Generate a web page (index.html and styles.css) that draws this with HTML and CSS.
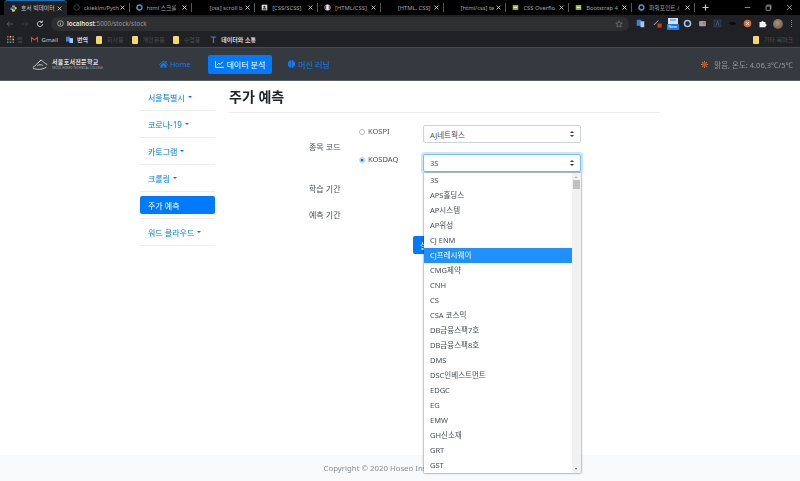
FILE: index.html
```html
<!DOCTYPE html>
<html lang="ko">
<head>
<meta charset="utf-8">
<title>호서 빅데이터</title>
<link rel="stylesheet" href="styles.css">
</head>
<body>
<div class="browser">
  <div class="tabstrip">
    <div class="tab active"><svg class="fav" viewBox="0 0 10 10"><path d="M5 0.5C3 .5 2.8 1.3 2.8 2.2V3h2.4v.5H1.8C.8 3.5 .5 4.3 .5 5.2s.4 1.8 1.3 1.8h1V5.8c0-.8.6-1.3 1.3-1.3h2c.8 0 1.2-.5 1.2-1.2V1.9C7.3 1 6.300 .5 5 .5z" fill="#5b9bd5"/><path d="M5 9.500c2 0 2.200-.8 2.200-1.700V7H4.800v-.5h3.400c1 0 1.300-.8 1.300-1.700S9.100 3 8.200 3h-1v1.200c0 .8-.6 1.300-1.300 1.300h-2c-.8 0-1.200.5-1.200 1.200v1.400C2.700 9 3.700 9.500 5 9.500z" fill="#f2c94c"/></svg><span class="tab-title">호서 빅데이터</span><svg class="tab-x" viewBox="0 0 6 6"><path d="M.7 .7l4.600 4.600M5.300 .7L.7 5.300"/></svg></div>
    <div class="tab"><svg class="fav" viewBox="0 0 10 10"><circle cx="5" cy="5" r="4" fill="none" stroke="#4a4f55" stroke-width="1.200"/></svg><span class="tab-title">ckiekim/Pyth</span><svg class="tab-x" viewBox="0 0 6 6"><path d="M.7 .7l4.600 4.600M5.300 .7L.7 5.300"/></svg></div>
    <div class="tab"><svg class="fav" viewBox="0 0 10 10"><circle cx="5" cy="5" r="3.500" fill="none" stroke="#4a90e2" stroke-width="2"/><path d="M5 1.500A3.500 3.500 0 0 1 8 3.200" fill="none" stroke="#e2493b" stroke-width="2"/><path d="M1.500 5A3.500 3.500 0 0 0 5 8.500" fill="none" stroke="#3aa757" stroke-width="2"/></svg><span class="tab-title">html 스크롤</span><svg class="tab-x" viewBox="0 0 6 6"><path d="M.7 .7l4.600 4.600M5.300 .7L.7 5.300"/></svg></div>
    <div class="tab"><span class="fav"></span><span class="tab-title">[css] scroll b</span><svg class="tab-x" viewBox="0 0 6 6"><path d="M.7 .7l4.600 4.600M5.300 .7L.7 5.300"/></svg></div>
    <div class="tab"><svg class="fav" viewBox="0 0 10 10"><rect x="1" y="1" width="8" height="8" fill="#ddd"/><circle cx="5" cy="4" r="1.600" fill="#333"/><rect x="2.500" y="6" width="5" height="2" fill="#333"/></svg><span class="tab-title">[CSS/SCSS]</span><svg class="tab-x" viewBox="0 0 6 6"><path d="M.7 .7l4.600 4.600M5.300 .7L.7 5.300"/></svg></div>
    <div class="tab"><svg class="fav" viewBox="0 0 10 10"><circle cx="5" cy="5" r="4.200" fill="#eee"/><path d="M3.300 1.200A4.200 4.200 0 0 0 3.300 8.800z" fill="#3557b7"/><path d="M6.700 1.200A4.200 4.200 0 0 1 6.700 8.800z" fill="#d9363e"/></svg><span class="tab-title">[HTML/CSS]</span><svg class="tab-x" viewBox="0 0 6 6"><path d="M.7 .7l4.600 4.600M5.300 .7L.7 5.300"/></svg></div>
    <div class="tab"><span class="fav"></span><span class="tab-title">[HTML, CSS]</span><svg class="tab-x" viewBox="0 0 6 6"><path d="M.7 .7l4.600 4.600M5.300 .7L.7 5.300"/></svg></div>
    <div class="tab"><span class="fav"></span><span class="tab-title">[html/css] te</span><svg class="tab-x" viewBox="0 0 6 6"><path d="M.7 .7l4.600 4.600M5.300 .7L.7 5.300"/></svg></div>
    <div class="tab"><svg class="fav" viewBox="0 0 10 10"><rect x="1" y="1.500" width="8" height="7" fill="#8cb84a"/><rect x="2.500" y="4" width="5" height="1.400" fill="#fff"/></svg><span class="tab-title">CSS Overflo</span><svg class="tab-x" viewBox="0 0 6 6"><path d="M.7 .7l4.600 4.600M5.300 .7L.7 5.300"/></svg></div>
    <div class="tab"><svg class="fav" viewBox="0 0 10 10"><rect x="1" y="1.500" width="8" height="7" fill="#8cb84a"/><rect x="2.500" y="4" width="5" height="1.400" fill="#fff"/></svg><span class="tab-title">Bootstrap 4</span><svg class="tab-x" viewBox="0 0 6 6"><path d="M.7 .7l4.600 4.600M5.300 .7L.7 5.300"/></svg></div>
    <div class="tab last"><svg class="fav" viewBox="0 0 10 10"><circle cx="5" cy="5" r="3.500" fill="none" stroke="#4a90e2" stroke-width="2"/><path d="M5 1.500A3.500 3.500 0 0 1 8 3.200" fill="none" stroke="#e2493b" stroke-width="2"/><path d="M1.500 5A3.500 3.500 0 0 0 5 8.500" fill="none" stroke="#3aa757" stroke-width="2"/></svg><span class="tab-title">파워포인트 /</span><svg class="tab-x" viewBox="0 0 6 6"><path d="M.7 .7l4.600 4.600M5.300 .7L.7 5.300"/></svg></div>
    <svg class="tab-plus" viewBox="0 0 7 7"><path d="M3.500 .5v6M.5 3.500h6"/></svg>
    <div class="win-ctrls">
      <svg viewBox="0 0 10 10"><path d="M1 5h8" stroke="#bbb"/></svg>
      <svg viewBox="0 0 10 10"><path d="M1.500 3h6v6h-6zM3 3V1.500h5.500V7H7.500" fill="none" stroke="#bbb"/></svg>
      <svg viewBox="0 0 10 10"><path d="M1.500 1.500l7 7M8.500 1.500l-7 7" stroke="#bbb"/></svg>
    </div>
  </div>
  <div class="toolbar">
    <svg class="tb-icon dim" viewBox="0 0 10 10"><path d="M8.500 5h-7M4.500 2l-3 3 3 3" fill="none" stroke="currentColor"/></svg>
    <svg class="tb-icon dimmer" viewBox="0 0 10 10"><path d="M1.500 5h7M5.500 2l3 3-3 3" fill="none" stroke="currentColor"/></svg>
    <svg class="tb-icon" viewBox="0 0 10 10"><path d="M8.300 5a3.300 3.300 0 1 1-1-2.400M7.800 .8v2.300H5.500" fill="none" stroke="#ddd" stroke-width="1.100"/></svg>
    <div class="omnibox">
      <svg class="info" viewBox="0 0 10 10"><circle cx="5" cy="5" r="4" fill="none" stroke="#ccc"/><path d="M5 4.300v3M5 2.500v1" stroke="#ccc"/></svg>
      <span class="host">localhost</span><span class="path">:5000/stock/stock</span>
      <svg class="star" viewBox="0 0 10 10"><path d="M5 1l1.200 2.700 2.900.3-2.200 1.900.7 2.900L5 7.300 2.400 8.800l.7-2.900L.9 4l2.900-.3z" fill="none" stroke="#888" stroke-width=".8"/></svg>
    </div>
    <div class="exts">
      <svg class="first-ext" viewBox="0 0 12 12"><rect x="1" y="1" width="6" height="8" fill="#3f7fd6"/><rect x="6" y="3" width="5" height="8" fill="#a8c7ee"/></svg>
      <svg viewBox="0 0 12 12"><path d="M1 8l6-6" stroke="#ccc" stroke-width="1.200"/><rect x="6" y="6" width="5.500" height="5.500" fill="#c4431a"/></svg>
      <span class="ext-new"><svg viewBox="0 0 12 6"><rect x="1" y="0" width="10" height="6" fill="#cfe2f7"/><rect x="3" y="1.500" width="6" height="1" fill="#2c7cd6"/></svg><b>New</b></span>
      <svg viewBox="0 0 12 12"><circle cx="6" cy="6" r="4" fill="none" stroke="#9cc3e6" stroke-width="2.200"/></svg>
      <svg viewBox="0 0 12 12"><rect x="1.500" y="2.500" width="9" height="7" rx="1" fill="#9aa0a6"/><rect x="6" y="4" width="3" height="3" fill="#c96a5a"/></svg>
      <svg viewBox="0 0 12 12"><rect x="1.500" y="1.500" width="9" height="9" fill="#1d2a3a" stroke="#34465c"/><path d="M4 9l2-6 2 6" fill="none" stroke="#4d6787"/></svg>
      <svg viewBox="0 0 12 12"><path d="M1 6l3-2h4l3 2-3 2H4z" fill="#0c0c0c"/></svg>
      <svg viewBox="0 0 12 12"><circle cx="6" cy="6" r="5" fill="#e9692c"/><path d="M4 4l4 4M8 4l-4 4" stroke="#fff"/></svg>
      <svg viewBox="0 0 12 12"><path d="M2 4h2.500a1.500 1.500 0 0 1 3 0H10v2.500a1.500 1.500 0 0 1 0 3V11H2z" fill="#f1f1f1"/></svg>
      <span class="avatar"></span>
      <span class="kebab"></span>
    </div>
  </div>
  <div class="bookmarks">
    <span class="bm dim-bm"><svg class="apps" viewBox="0 0 9 9"><path d="M0 0h2v2H0z" fill="#e2493b"/><path d="M3.500 0h2v2h-2z" fill="#f2c94c"/><path d="M7 0h2v2H7z" fill="#3aa757"/><path d="M0 3.500h2v2H0z" fill="#4a90e2"/><path d="M3.500 3.500h2v2h-2z" fill="#e2493b"/><path d="M7 3.500h2v2H7z" fill="#f2c94c"/><path d="M0 7h2v2H0z" fill="#3aa757"/><path d="M3.500 7h2v2h-2z" fill="#4a90e2"/><path d="M7 7h2v2H7z" fill="#e2493b"/></svg>앱</span>
    <span class="bm"><svg class="bm-ic" viewBox="0 0 10 8"><path d="M.5 8V1l4.500 3.500L9.500 1v7" fill="none" stroke="#e2493b" stroke-width="1.600"/></svg>Gmail</span>
    <span class="bm bold-bm"><svg class="bm-ic" viewBox="0 0 10 10"><rect x="0" y="1" width="6" height="7" fill="#3f7fd6"/><rect x="5" y="3" width="5" height="7" fill="#a8c7ee"/></svg>번역</span>
    <span class="bm dim-bm"><span class="folder"></span>회사용</span>
    <span class="bm dim-bm"><span class="folder"></span>개인유용</span>
    <span class="bm dim-bm"><span class="folder"></span>수업용</span>
    <span class="bm bold-bm"><svg class="bm-ic t-ic" viewBox="0 0 10 10"><path d="M1 1.500h8M5 1.500V10" stroke="#3b82d6" stroke-width="1.600" fill="none"/></svg>데이터와 소통</span>
    <span class="bm dim-bm bm-other"><span class="folder"></span>기타 북마크</span>
  </div>
</div>

<nav class="navbar">
  <a class="brand">
    <svg class="logo" viewBox="0 0 20 14"><path d="M1 10c3-1 5-5 9-8 2 1 4 4 7 5M1 11c4 2 10 2 15-1M6 8c2-1 4-1 6 0M10 2l-3 3" fill="none" stroke="#e8e8e8" stroke-width=".9"/></svg>
    <span class="brand-text"><b>서울호서전문학교</b><small>SEOUL HOSEO TECHNICAL COLLEGE</small></span>
  </a>
  <a class="nav-item home"><svg class="nav-ic" viewBox="0 0 12 10"><path d="M6 .5L0 5.500l.7.8L6 2l5.300 4.300.7-.8L9.800 3.700V1H8.300v1.500zM2 6.500V10h3V7.500h2V10h3V6.500L6 3.200z" fill="currentColor"/></svg>Home</a>
  <a class="nav-item on"><svg class="nav-ic" viewBox="0 0 12 10"><path d="M.5 1v8.500H12" fill="none" stroke="currentColor" stroke-width="1.300"/><path d="M2.500 6.500l2.500-2.500 2 1.500 3.500-3.500" fill="none" stroke="currentColor" stroke-width="1.300"/></svg>데이터 분석</a>
  <a class="nav-item"><svg class="nav-ic" viewBox="0 0 10 10"><ellipse cx="5" cy="5" rx="4.500" ry="4.700" fill="currentColor"/><path d="M5 0v10" stroke="#343a40" stroke-width=".6"/></svg>머신 러닝</a>
  <span class="weather"><svg class="sun" viewBox="0 0 10 10"><path d="M5 0v10M0 5h10M1.500 1.500l7 7M8.500 1.500l-7 7" stroke="#efb23c" stroke-width=".9"/><circle cx="5" cy="5" r="3.200" fill="#d9431e"/></svg>맑음, 온도: 4.06,3℃/5℃</span>
</nav>

<main class="page">
  <aside class="side">
    <a class="side-item caret">서울특별시</a>
    <a class="side-item caret">코로나-19</a>
    <a class="side-item caret">카토그램</a>
    <a class="side-item caret">크롤링</a>
    <a class="side-item current"><span>주가 예측</span></a>
    <a class="side-item caret">워드 클라우드</a>
  </aside>
  <section class="content">
    <h1>주가 예측</h1>
    <form class="form">
      <div class="code-row">
        <div class="lbl">종목 코드</div>
        <div class="markets">
          <div class="mkt"><label class="radio-line"><span class="radio"></span>KOSPI</label><span class="sel">AJ네트웍스<i class="arrows"></i></span></div>
          <div class="mkt second"><label class="radio-line"><span class="radio checked"></span>KOSDAQ</label><span class="sel focus">3S<i class="arrows"></i>
            <div class="dropdown">
              <ul>
                <li>3S</li><li>APS홀딩스</li><li>AP시스템</li><li>AP위성</li><li>CJ ENM</li><li class="hl">CJ프레시웨이</li><li>CMG제약</li><li>CNH</li><li>CS</li><li>CSA 코스믹</li><li>DB금융스팩7호</li><li>DB금융스팩8호</li><li>DMS</li><li>DSC인베스트먼트</li><li>EDGC</li><li>EG</li><li>EMW</li><li>GH신소재</li><li>GRT</li><li>GST</li>
              </ul>
              <div class="sbar"><i class="up"></i><i class="thumb"></i><i class="down"></i></div>
            </div>
          </span></div>
        </div>
      </div>
      <div class="lbl plain">학습 기간</div>
      <div class="lbl plain">예측 기간</div>
      <div class="submit-row"><button type="button" class="submit">실행</button></div>
    </form>
  </section>
</main>

<footer class="footer">Copyright © 2020 Hoseo Institute of Tech.</footer>
</body>
</html>
```
FILE: styles.css
```css
* { box-sizing: border-box; }
html, body { margin: 0; height: 481px; overflow: hidden; }
body {
  display: flex; flex-direction: column; background: #fff; color: #212529;
  font-family: "Noto Sans", "Noto Sans CJK KR", sans-serif; font-size: 8px;
  filter: blur(.35px);
}
.browser { flex: none; background: #202124; }
.tabstrip { height: 15px; background: #000; display: flex; align-items: stretch; padding-left: 4px; color: #a4a4a4; font-size: 5.800px; }
.tab { width: 62.800px; flex: none; display: flex; align-items: center; padding: 0 4px 0 6px; position: relative; }
.tab::after { content: ""; position: absolute; right: 0; top: 3px; bottom: 3px; width: 1px; background: #555; }
.tab.active::after { display: none; }
.tab.active { background: #202124; border-top: 1px solid #1a6fb0; border-radius: 4px 4px 0 0; color: #c8c8c8; }
.fav { width: 7px; height: 7px; flex: none; margin-right: 4px; }
.tab-title { flex: 1; overflow: hidden; white-space: nowrap; min-width: 0; line-height: 10px; }
.tab-x { flex: none; width: 5px; height: 5px; stroke: #ddd; stroke-width: 1; margin-right: 1px; }
.tab-plus { width: 7px; height: 7px; align-self: center; margin-left: 7px; stroke: #ccc; stroke-width: 1.200; }
.win-ctrls { margin-left: auto; display: flex; gap: 14px; padding-right: 7px; align-items: center; }
.win-ctrls svg { width: 7px; height: 7px; }
.toolbar { height: 17px; display: flex; align-items: center; padding-left: 6px; background: #202124; }
.tb-icon { width: 8px; height: 8px; margin-right: 7px; color: #777; flex: none; }
.tb-icon.dim { color: #666; }
.tb-icon.dimmer { color: #444; }
.omnibox { flex: none; width: 578px; height: 14px; border-radius: 7px; background: #2e2f31; display: flex; align-items: center; padding: 0 6px 0 6px; font-size: 6.300px; }
.info { width: 7px; height: 7px; margin-right: 3px; }
.host { color: #e4e4e4; font-weight: 600; }
.path { color: #999; }
.star { width: 8px; height: 8px; margin-left: auto; }
.exts { display: flex; align-items: center; gap: 6px; padding-left: 7px; flex: none; }
.exts svg { width: 9px; height: 9px; flex: none; }
.first-ext { margin-right: 2px; }
.ext-new { position: relative; width: 12px; height: 12px; display: block; margin: 0 -1.500px; }
.ext-new svg { width: 12px; height: 6px; display: block; }
.ext-new b { display: block; background: #1f7ae0; color: #fff; font-size: 4px; line-height: 6px; text-align: center; font-weight: normal; }
.avatar { width: 10px; height: 10px; border-radius: 50%; background: radial-gradient(circle at 45% 40%, #a8977f, #5a4d40); flex: none; }
.kebab { width: 1px; height: 7px; border-left: 1px dotted #888; margin-left: 2px; }
.bookmarks { height: 15px; display: flex; align-items: center; padding-left: 7px; font-size: 6px; color: #c5c5c5; gap: 8px; }
.bm { display: flex; align-items: center; white-space: nowrap; }
.dim-bm { color: #4e4e4e; }
.bold-bm { color: #d8d8d8; font-weight: 600; }
.apps { width: 7px; height: 7px; margin-right: 3px; }
.bm-ic { width: 7px; height: 7px; margin-right: 4px; }
.t-ic { margin-left: 2px; margin-right: 4px; height: 9px; width: 7px; }
.folder { width: 6px; height: 8px; background: #f5d76e; margin-right: 5px; border-radius: 1px; }
.bm-other { margin-left: auto; padding-right: 7px; }

.navbar { height: 34px; flex: none; background: #343a40; border-top: 1px solid #454b52; border-bottom: 1px solid #5a5f64; display: flex; align-items: center; padding-left: 32px; font-size: 8px; }
.brand { display: flex; align-items: center; width: 119px; flex: none; color: #e4e4e4; }
.logo { width: 18px; height: 13px; margin-right: 2px; }
.brand-text { display: flex; flex-direction: column; line-height: 1; }
.brand-text b { font-size: 6px; letter-spacing: .3px; line-height: 7px; }
.brand-text small { font-size: 3px; line-height: 4px; color: #aaa; white-space: nowrap; }
.nav-item { display: flex; align-items: center; color: #0f7cf0; height: 19px; padding: 0 8px; margin-right: 9px; border-radius: 2px; white-space: nowrap; }
.nav-item.home { font-size: 7.200px; margin-right: 10px; }
.nav-item.on { background: #007bff; color: #fff; margin-right: 7px; padding: 0 7px; }
.nav-ic { width: 9px; height: 8px; margin-right: 2px; }
.weather { margin-left: auto; display: flex; align-items: center; color: #989b9e; padding-right: 7px; white-space: nowrap; font-size: 7.500px; }
.sun { width: 7px; height: 7px; margin-right: 6px; }

.page { flex: 1; display: flex; padding-left: 140px; min-height: 0; }
.side { width: 75px; flex: none; display: flex; flex-direction: column; padding-top: 3px; }
.side-item { height: 27px; display: flex; align-items: center; padding-left: 8px; color: #007bff; border-bottom: 1px solid #eee; flex: none; }
.side-item.caret::after { content: ""; margin-left: 3px; border-top: 2.500px solid currentColor; border-left: 2.500px solid transparent; border-right: 2.500px solid transparent; }
.side-item.current { color: #fff; padding-left: 0; }
.side-item.current span { display: flex; align-items: center; width: 100%; height: 18px; padding-left: 8px; background: #007bff; border-radius: 2px; }
.content { width: 431px; margin-left: 14px; flex: none; }
h1 { margin: 0; height: 32px; padding-top: 7px; font-size: 14px; line-height: 18px; font-weight: 700; border-bottom: 1px solid #eee; }
.form { padding-left: 80px; display: flex; flex-direction: column; }
.code-row { display: flex; align-items: center; height: 64px; margin-top: 3px; }
.lbl { width: 49px; flex: none; color: #495057; line-height: 10px; margin-bottom: 2px; }
.lbl.plain { width: auto; height: 26px; line-height: 14px; padding-top: 2px; margin-bottom: 0; }
.markets { display: flex; flex-direction: column; gap: 11px; flex: none; margin-top: 1px; }
.mkt { display: flex; align-items: flex-start; height: 18px; }
.radio-line { width: 65px; flex: none; display: flex; align-items: center; color: #495057; padding-left: 1px; font-size: 7.500px; margin-top: 2px; line-height: 9px; }
.second .radio-line { margin-top: 1px; }
.radio { width: 6px; height: 6px; border-radius: 50%; border: 1px solid #b3b7bb; background: #fff; margin-right: 3px; flex: none; }
.radio.checked { border: 1px solid #cfe2ff; background: #007bff; box-shadow: inset 0 0 0 .5px #fff; }
.sel { position: relative; display: flex; align-items: center; width: 158px; height: 18px; padding-left: 6px; border: 1px solid #ced4da; border-radius: 2px; color: #495057; background: #fff; font-size: 7.500px; }
.sel.focus { border-color: #80bdff; box-shadow: 0 0 0 2px rgba(0,123,255,.2); }
.arrows { position: absolute; right: 6px; top: 50%; margin-top: -3px; width: 0; height: 6px; border-left: 2px solid transparent; border-right: 2px solid transparent; }
.arrows::before, .arrows::after { content: ""; position: absolute; left: -2px; border-left: 2px solid transparent; border-right: 2px solid transparent; }
.arrows::before { top: 0; border-bottom: 2.500px solid #343a40; }
.arrows::after { bottom: 0; border-top: 2.500px solid #343a40; }
.dropdown { position: absolute; left: 0; top: 18px; width: 157px; height: 300px; background: #fff; box-shadow: 0 0 2px rgba(0,0,0,.65); display: flex; z-index: 5; }
.dropdown ul { list-style: none; margin: 0; padding: 0; flex: 1; }
.dropdown li { height: 15px; line-height: 15px; padding-left: 6px; color: #495057; white-space: nowrap; }
.dropdown li.hl { background: #1e90ff; color: #fff; }
.sbar { width: 9px; flex: none; background: #f1f1f1; position: relative; }
.sbar .thumb { position: absolute; left: 1px; right: 1px; top: 7px; height: 9px; background: #c1c1c1; }
.sbar .up, .sbar .down { position: absolute; left: 3px; border-left: 1.500px solid transparent; border-right: 1.500px solid transparent; }
.sbar .up { top: 3px; border-bottom: 2px solid #a0a0a0; }
.sbar .down { bottom: 3px; border-top: 2px solid #505050; }
.submit-row { display: flex; padding-left: 104px; margin-top: 4px; }
.submit { width: 32px; height: 18px; padding: 0 0 0 7px; border: 0; background: #007bff; color: #fff; font: inherit; border-radius: 2px; text-align: left; }
.footer { height: 26px; flex: none; background: #f8f9fa; text-align: center; line-height: 26px; color: #868e96; font-size: 7.800px; }
```
